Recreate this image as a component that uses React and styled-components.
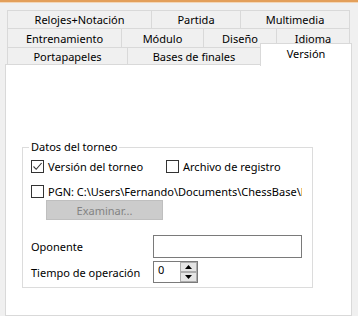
import React from 'react';
import styled, { createGlobalStyle } from 'styled-components';

const Global = createGlobalStyle`
  html, body { margin: 0; padding: 0; background: #f0f0f0; }
  body { font-family: "Noto Sans", "Open Sans", sans-serif; font-size: 11px; color: #000; }
`;

const rows = [
  [['Relojes+Notación', 144], ['Partida', 89], ['Multimedia', 110]],
  [['Entrenamiento', 114], ['Módulo', 82], ['Diseño', 73], ['Idioma', 74]],
  [['Portapapeles', 120], ['Bases de finales', 133]],
];

function App() {
  return (
    <>
      <Global />
      <Window>
        <TopBar />
        <Tabs>
          {rows.map((row, i) => (
            <TabRow key={i} h={i === 1 ? 19 : i === 2 ? 17 : 18}>
              {row.map(([label, w]) => (
                <Tab key={label} w={w}>{label}</Tab>
              ))}
              {i === 2 && <ActiveTab>Versión</ActiveTab>}
            </TabRow>
          ))}
        </Tabs>
        <Panel>
          <Group>
            <Legend>Datos del torneo</Legend>
            <CheckRow>
              <CheckCell w={135}>
                <Check><CheckMark /></Check>
                <Label>Versión del torneo</Label>
              </CheckCell>
              <CheckCell>
                <Check />
                <Label>Archivo de registro</Label>
              </CheckCell>
            </CheckRow>
            <CheckRow gap={12}>
              <CheckCell>
                <Check />
                <PathLabel>PGN: C:\Users\Fernando\Documents\ChessBase\Mis partidas</PathLabel>
              </CheckCell>
            </CheckRow>
            <Button disabled>Examinar...</Button>
            <FieldRow gap={15}>
              <FieldLabel>Oponente</FieldLabel>
              <TextBox />
            </FieldRow>
            <FieldRow gap={3}>
              <FieldLabel>Tiempo de operación</FieldLabel>
              <Spin>
                <SpinValue>0</SpinValue>
                <SpinButtons>
                  <SpinBtn><Arrow up /></SpinBtn>
                  <SpinBtn><Arrow /></SpinBtn>
                </SpinButtons>
              </Spin>
            </FieldRow>
          </Group>
        </Panel>
      </Window>
    </>
  );
}

export default App;

function CheckMark() {
  return (
    <svg width="11" height="11" viewBox="0 0 11 11">
      <path d="M1.5 5.5 L4.2 8.3 L9.6 2" fill="none" stroke="#333" strokeWidth="1.1" />
    </svg>
  );
}

function Arrow({ up }) {
  return (
    <svg width="7" height="4" viewBox="0 0 7 4">
      <path d={up ? 'M0 4 L3.5 0 L7 4 Z' : 'M0 0 L7 0 L3.5 4 Z'} fill="#000" />
    </svg>
  );
}

const Window = styled.div`
  width: 358px;
  height: 316px;
  overflow: hidden;
  display: flex;
  flex-direction: column;
  background: #f0f0f0;
`;

const TopBar = styled.div`
  height: 2px;
  background: #e39f5a;
  border-bottom: 1px solid #f3d6b6;
  margin-bottom: 7px;
`;

const Tabs = styled.div`
  display: flex;
  flex-direction: column;
  padding-left: 7px;
`;

const TabRow = styled.div`
  display: flex;
  height: ${p => p.h}px;
  position: relative;
`;

const Tab = styled.div`
  box-sizing: border-box;
  width: ${p => p.w}px;
  height: 100%;
  border: 1px solid #d9d9d9;
  border-right: none;
  border-bottom: none;
  display: flex;
  align-items: center;
  justify-content: center;
  line-height: 1;
  &:last-child { border-right: 1px solid #d9d9d9; }
`;

const ActiveTab = styled.div`
  position: absolute;
  left: 253px;
  top: -4px;
  width: 92px;
  height: 23px;
  box-sizing: border-box;
  background: #fff;
  border: 1px solid #d9d9d9;
  border-bottom: none;
  display: flex;
  justify-content: center;
  padding-top: 2px;
  z-index: 2;
`;

const Panel = styled.div`
  margin-left: 5px;
  width: 347px;
  flex: 1;
  box-sizing: border-box;
  background: #fff;
  border: 1px solid #d9d9d9;
  padding: 82px 0 0 16px;
`;

const Group = styled.div`
  position: relative;
  width: 291px;
  height: 141px;
  box-sizing: border-box;
  border: 1px solid #dcdcdc;
  padding: 12px 0 0 8px;
  display: flex;
  flex-direction: column;
`;

const Legend = styled.div`
  position: absolute;
  top: -9px;
  left: 6px;
  background: #fff;
  padding: 0 2px;
  line-height: 16px;
`;

const CheckRow = styled.div`
  display: flex;
  align-items: center;
  height: 13px;
  margin-top: ${p => p.gap || 0}px;
  white-space: nowrap;
`;

const CheckCell = styled.div`
  display: flex;
  align-items: center;
  width: ${p => (p.w ? `${p.w}px` : 'auto')};
`;

const Check = styled.div`
  box-sizing: border-box;
  width: 13px;
  height: 13px;
  flex: none;
  border: 1px solid #333;
  background: #fff;
  display: flex;
  align-items: center;
  justify-content: center;
`;

const Label = styled.span`
  margin-left: 4px;
  line-height: 16px;
`;

const PathLabel = styled(Label)`
  display: block;
  overflow: hidden;
  width: 254px;
`;

const Button = styled.button`
  margin: 2px 0 0 15px;
  width: 117px;
  height: 20px;
  box-sizing: border-box;
  border: 1px solid #bfbfbf;
  background: #cccccc;
  color: #838383;
  font: inherit;
  padding: 0;
`;

const FieldRow = styled.div`
  display: flex;
  align-items: center;
  margin-top: ${p => p.gap}px;
`;

const FieldLabel = styled.span`
  width: 122px;
`;

const TextBox = styled.div`
  width: 149px;
  height: 23px;
  box-sizing: border-box;
  border: 1px solid #7a7a7a;
  background: #fff;
`;

const Spin = styled.div`
  display: flex;
  width: 45px;
  height: 22px;
  box-sizing: border-box;
  border: 1px solid #7a7a7a;
  align-items: stretch;
`;

const SpinValue = styled.span`
  flex: 1;
  padding: 2px 0 0 4px;
  line-height: 1;
`;

const SpinButtons = styled.div`
  display: flex;
  flex-direction: column;
  width: 16px;
  border-left: 1px solid #adadad;
  background: #e1e1e1;
`;

const SpinBtn = styled.div`
  flex: 1;
  display: flex;
  align-items: center;
  justify-content: center;
  border: 1px solid #adadad;
  border-left: none;
  background: #e5e5e5;
`;
